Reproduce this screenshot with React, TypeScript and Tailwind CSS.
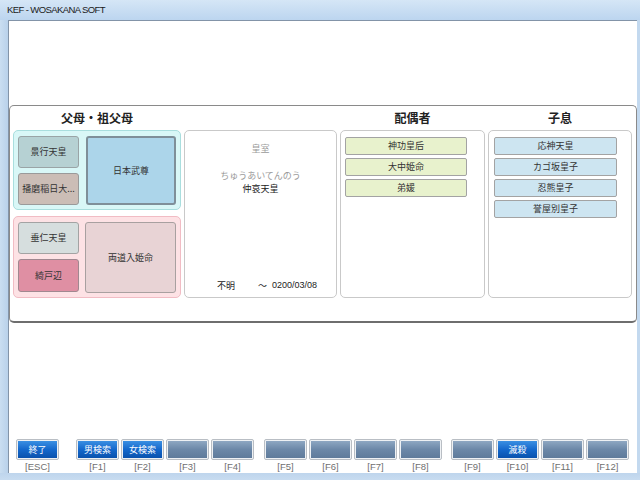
import React from "react";

const jp = { fontFamily: '"Noto Sans CJK JP", "Noto Sans", sans-serif' };
const latin = { fontFamily: '"Liberation Sans", "Noto Sans", sans-serif' };

type FKey = { label: string; text?: string; active?: boolean };

const groups: FKey[][] = [
    [{ label: "[ESC]", text: "終了", active: true }],
    [
        { label: "[F1]", text: "男検索", active: true },
        { label: "[F2]", text: "女検索", active: true },
        { label: "[F3]" },
        { label: "[F4]" },
    ],
    [{ label: "[F5]" }, { label: "[F6]" }, { label: "[F7]" }, { label: "[F8]" }],
    [
        { label: "[F9]" },
        { label: "[F10]", text: "滅殺", active: true },
        { label: "[F11]" },
        { label: "[F12]" },
    ],
];

function Key({ k }: { k: FKey }) {
    return (
        <div className="flex flex-col items-center w-[43px]">
            <div className="w-[43px] h-[21px] rounded-[2px] border border-[#b9bec4] p-[1px] bg-[#eef1f4]">
                <div
                    className={
                        k.active
                            ? "h-full flex items-center justify-center text-white text-[9px] bg-gradient-to-b from-[#3a8fe2] via-[#1468cc] to-[#0a52ad]"
                            : "h-full bg-gradient-to-b from-[#8ea7c2] via-[#6c88a8] to-[#5f7b9b]"
                    }
                >
                    {k.text}
                </div>
            </div>
            <div className="mt-[1px] text-[9.5px] leading-[11px] text-[#6f6f6f]" style={latin}>
                {k.label}
            </div>
        </div>
    );
}

function Person({ name, className }: { name: string; className: string }) {
    return (
        <div
            className={
                "flex items-center justify-center rounded-[3px] border text-[9px] text-[#333] " + className
            }
        >
            {name}
        </div>
    );
}

function ListItem({ name, bg }: { name: string; bg: string }) {
    return (
        <div
            className={
                "h-[18px] flex items-center justify-center rounded-[2px] border border-[#a3a3a3] text-[9px] text-[#333] " +
                bg
            }
        >
            {name}
        </div>
    );
}

export default function App() {
    return (
        <div className="w-[640px] h-[480px] flex flex-col bg-[#c3d9ef] overflow-hidden" style={jp}>
            {/* Title bar */}
            <div
                className="h-[20px] shrink-0 flex items-center pl-[7px] pt-[1px] text-[9.5px] tracking-[-0.6px] text-[#1a1a1a] bg-gradient-to-b from-[#d5e6f6] to-[#bcd5ef]"
                style={latin}
            >
                KEF - WOSAKANA SOFT
            </div>

            <div className="flex flex-1 min-h-0">
                <div className="w-[8px] bg-gradient-to-r from-[#cadef1] to-[#b9d1ea]" />

                {/* Client area */}
                <div className="flex-1 bg-white border-l border-t border-[#8394a8] flex flex-col">
                    <div className="h-[84px] shrink-0" />

                    {/* Main panel */}
                    <div className="h-[218px] shrink-0 rounded-[5px] border border-[#8a8a8a] border-b-2 border-b-[#6e6e6e] px-[3px] flex flex-col">
                        <div className="h-[24px] grid grid-cols-[168px_153px_145px_144px] gap-[3px] items-center text-[12px] font-bold text-[#222]">
                            <div className="text-center">父母・祖父母</div>
                            <div />
                            <div className="text-center">配偶者</div>
                            <div className="text-center">子息</div>
                        </div>

                        <div className="h-[168px] grid grid-cols-[168px_153px_145px_144px] gap-[3px]">
                            {/* Parents */}
                            <div className="flex flex-col gap-[6px]">
                                <div className="h-[80px] rounded-[5px] border border-[#a9dede] bg-[#d9f7f7] p-[4px] pt-[5px] grid grid-cols-[61px_1fr] gap-x-[7px]">
                                    <div className="flex flex-col gap-[5px]">
                                        <Person name="景行天皇" className="h-[32px] border-[#9aa4a6] bg-[#b6d1d3]" />
                                        <Person name="播磨稲日大..." className="h-[32px] border-[#9a9a9a] bg-[#cbbdb6]" />
                                    </div>
                                    <Person name="日本武尊" className="border-2 border-[#7f8f99] bg-[#acd5ea]" />
                                </div>
                                <div className="h-[82px] rounded-[5px] border border-[#f1bcc4] bg-[#fde2e5] p-[4px] pt-[5px] grid grid-cols-[61px_1fr] gap-x-[6px]">
                                    <div className="flex flex-col gap-[5px]">
                                        <Person name="垂仁天皇" className="h-[32px] border-[#a3a3a3] bg-[#d6dede]" />
                                        <Person name="綺戸辺" className="h-[33px] border-[#a08890] bg-[#df8fa3]" />
                                    </div>
                                    <Person name="両道入姫命" className="border-[#a8a0a0] bg-[#e8d3d5]" />
                                </div>
                            </div>

                            {/* Self */}
                            <div className="rounded-[5px] border border-[#c9c9c9] flex flex-col items-center text-[9px]">
                                <div className="mt-[11px] text-[#9a9a9a]">皇室</div>
                                <div className="mt-[13px] text-[#9a9a9a]">ちゅうあいてんのう</div>
                                <div className="text-[#222]">仲哀天皇</div>
                                <div className="mt-auto mb-[5px] w-full flex items-center text-[#222]">
                                    <span className="ml-[32px]">不明</span>
                                    <span className="ml-[23px]">〜</span>
                                    <span className="ml-[5px]" style={latin}>
                                        0200/03/08
                                    </span>
                                </div>
                            </div>

                            {/* Spouses */}
                            <div className="rounded-[5px] border border-[#c9c9c9] pt-[6px] pl-[4px] pr-[17px] flex flex-col gap-[3px]">
                                <ListItem name="神功皇后" bg="bg-[#e8f2cd]" />
                                <ListItem name="大中姫命" bg="bg-[#e8f2cd]" />
                                <ListItem name="弟媛" bg="bg-[#e8f2cd]" />
                            </div>

                            {/* Children */}
                            <div className="rounded-[5px] border border-[#c9c9c9] pt-[6px] pl-[5px] pr-[14px] flex flex-col gap-[3px]">
                                <ListItem name="応神天皇" bg="bg-[#cde5f1]" />
                                <ListItem name="カゴ坂皇子" bg="bg-[#cde5f1]" />
                                <ListItem name="忍熊皇子" bg="bg-[#cde5f1]" />
                                <ListItem name="誉屋別皇子" bg="bg-[#cde5f1]" />
                            </div>
                        </div>
                    </div>

                    {/* Function keys */}
                    <div className="mt-auto mb-[1px] pl-[7px] flex">
                        {groups.map((g, i) => (
                            <div
                                key={i}
                                className={
                                    "flex gap-[2px] " +
                                    (i === 1 ? "ml-[17px]" : i === 2 ? "ml-[10px]" : i === 3 ? "ml-[9px]" : "")
                                }
                            >
                                {g.map((k) => (
                                    <Key key={k.label} k={k} />
                                ))}
                            </div>
                        ))}
                    </div>
                </div>

                <div className="w-[3px] bg-[#c3d9ef]" />
            </div>

            <div className="h-[7px] shrink-0 bg-gradient-to-b from-[#bed5ed] to-[#c8dcf0]" />
        </div>
    );
}
